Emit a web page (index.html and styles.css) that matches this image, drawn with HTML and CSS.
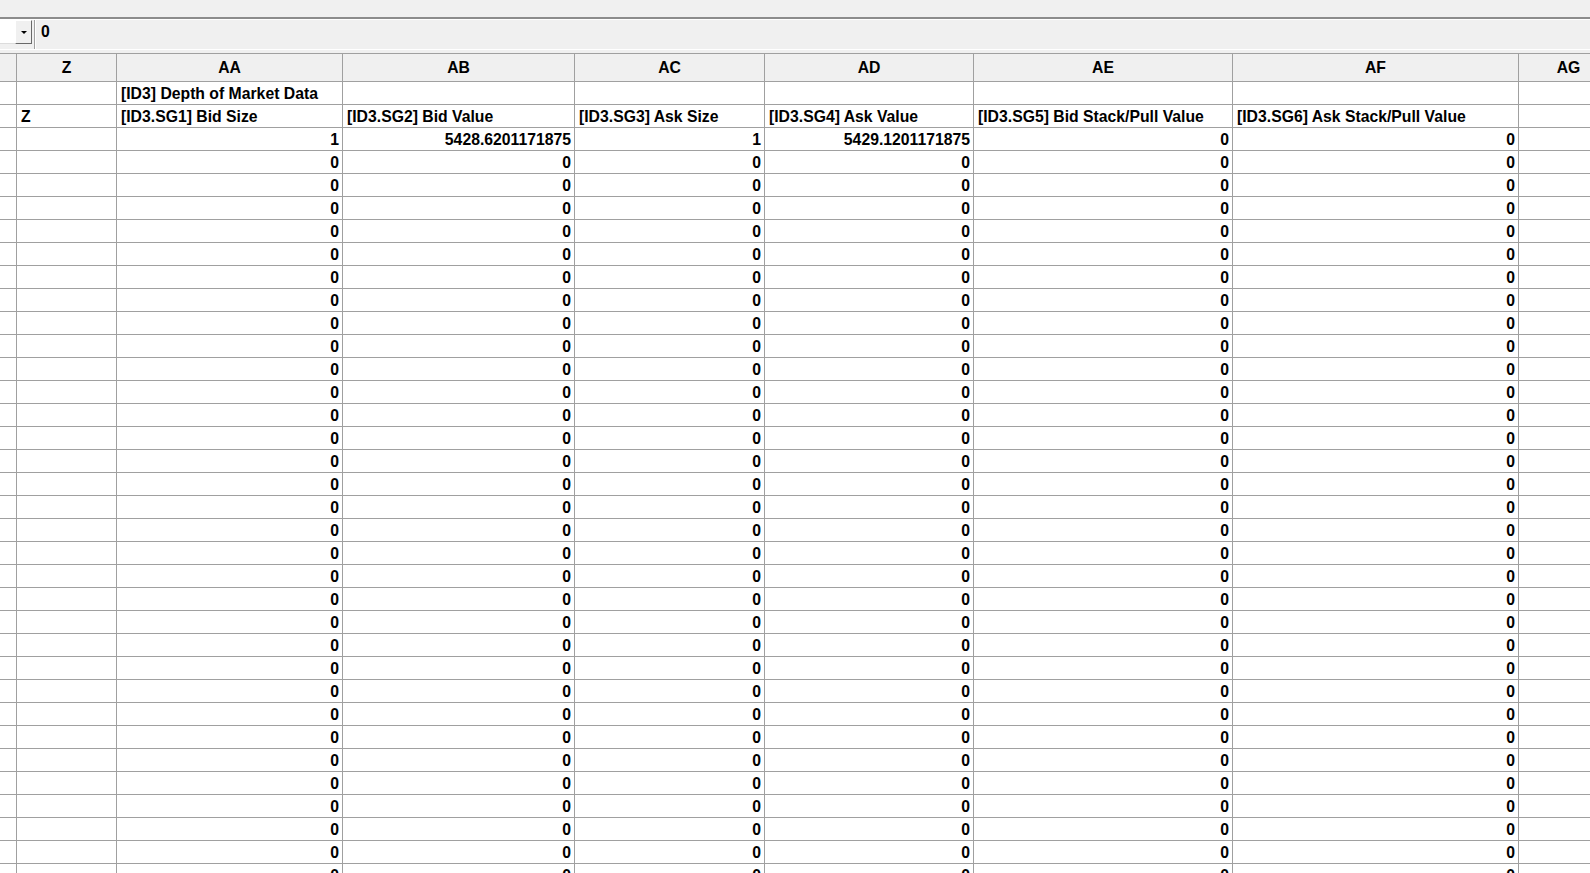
FILE: index.html
```html
<!DOCTYPE html>
<html>
<head>
<meta charset="utf-8">
<title>Sheet</title>
<link rel="stylesheet" href="styles.css">
</head>
<body>
<div class="app">
  <div class="titlebar"></div>
  <div class="formula">
    <div class="namebox">
      <div class="namefield"></div>
      <div class="namebtn"><span class="arrow"></span></div>
    </div>
    <div class="fsep"></div>
    <div class="ftext">0</div>
  </div>
  <div class="fgap"></div>
  <div class="sheet">
    <div class="row head">
      <div class="c rn"></div><div class="c">Z</div><div class="c">AA</div><div class="c">AB</div><div class="c">AC</div><div class="c">AD</div><div class="c">AE</div><div class="c">AF</div><div class="c">AG</div>
    </div>
    <div class="row">
      <div class="c rn"></div><div class="c"></div><div class="c l">[ID3] Depth of Market Data</div><div class="c"></div><div class="c"></div><div class="c"></div><div class="c"></div><div class="c"></div><div class="c"></div>
    </div>
    <div class="row">
      <div class="c rn"></div><div class="c l">Z</div><div class="c l">[ID3.SG1] Bid Size</div><div class="c l">[ID3.SG2] Bid Value</div><div class="c l">[ID3.SG3] Ask Size</div><div class="c l">[ID3.SG4] Ask Value</div><div class="c l">[ID3.SG5] Bid Stack/Pull Value</div><div class="c l">[ID3.SG6] Ask Stack/Pull Value</div><div class="c"></div>
    </div>
    <div class="row">
      <div class="c rn"></div><div class="c"></div><div class="c r">1</div><div class="c r">5428.6201171875</div><div class="c r">1</div><div class="c r">5429.1201171875</div><div class="c r">0</div><div class="c r">0</div><div class="c"></div>
    </div>
    <div class="row"><div class="c rn"></div><div class="c"></div><div class="c r">0</div><div class="c r">0</div><div class="c r">0</div><div class="c r">0</div><div class="c r">0</div><div class="c r">0</div><div class="c"></div></div>
    <div class="row"><div class="c rn"></div><div class="c"></div><div class="c r">0</div><div class="c r">0</div><div class="c r">0</div><div class="c r">0</div><div class="c r">0</div><div class="c r">0</div><div class="c"></div></div>
    <div class="row"><div class="c rn"></div><div class="c"></div><div class="c r">0</div><div class="c r">0</div><div class="c r">0</div><div class="c r">0</div><div class="c r">0</div><div class="c r">0</div><div class="c"></div></div>
    <div class="row"><div class="c rn"></div><div class="c"></div><div class="c r">0</div><div class="c r">0</div><div class="c r">0</div><div class="c r">0</div><div class="c r">0</div><div class="c r">0</div><div class="c"></div></div>
    <div class="row"><div class="c rn"></div><div class="c"></div><div class="c r">0</div><div class="c r">0</div><div class="c r">0</div><div class="c r">0</div><div class="c r">0</div><div class="c r">0</div><div class="c"></div></div>
    <div class="row"><div class="c rn"></div><div class="c"></div><div class="c r">0</div><div class="c r">0</div><div class="c r">0</div><div class="c r">0</div><div class="c r">0</div><div class="c r">0</div><div class="c"></div></div>
    <div class="row"><div class="c rn"></div><div class="c"></div><div class="c r">0</div><div class="c r">0</div><div class="c r">0</div><div class="c r">0</div><div class="c r">0</div><div class="c r">0</div><div class="c"></div></div>
    <div class="row"><div class="c rn"></div><div class="c"></div><div class="c r">0</div><div class="c r">0</div><div class="c r">0</div><div class="c r">0</div><div class="c r">0</div><div class="c r">0</div><div class="c"></div></div>
    <div class="row"><div class="c rn"></div><div class="c"></div><div class="c r">0</div><div class="c r">0</div><div class="c r">0</div><div class="c r">0</div><div class="c r">0</div><div class="c r">0</div><div class="c"></div></div>
    <div class="row"><div class="c rn"></div><div class="c"></div><div class="c r">0</div><div class="c r">0</div><div class="c r">0</div><div class="c r">0</div><div class="c r">0</div><div class="c r">0</div><div class="c"></div></div>
    <div class="row"><div class="c rn"></div><div class="c"></div><div class="c r">0</div><div class="c r">0</div><div class="c r">0</div><div class="c r">0</div><div class="c r">0</div><div class="c r">0</div><div class="c"></div></div>
    <div class="row"><div class="c rn"></div><div class="c"></div><div class="c r">0</div><div class="c r">0</div><div class="c r">0</div><div class="c r">0</div><div class="c r">0</div><div class="c r">0</div><div class="c"></div></div>
    <div class="row"><div class="c rn"></div><div class="c"></div><div class="c r">0</div><div class="c r">0</div><div class="c r">0</div><div class="c r">0</div><div class="c r">0</div><div class="c r">0</div><div class="c"></div></div>
    <div class="row"><div class="c rn"></div><div class="c"></div><div class="c r">0</div><div class="c r">0</div><div class="c r">0</div><div class="c r">0</div><div class="c r">0</div><div class="c r">0</div><div class="c"></div></div>
    <div class="row"><div class="c rn"></div><div class="c"></div><div class="c r">0</div><div class="c r">0</div><div class="c r">0</div><div class="c r">0</div><div class="c r">0</div><div class="c r">0</div><div class="c"></div></div>
    <div class="row"><div class="c rn"></div><div class="c"></div><div class="c r">0</div><div class="c r">0</div><div class="c r">0</div><div class="c r">0</div><div class="c r">0</div><div class="c r">0</div><div class="c"></div></div>
    <div class="row"><div class="c rn"></div><div class="c"></div><div class="c r">0</div><div class="c r">0</div><div class="c r">0</div><div class="c r">0</div><div class="c r">0</div><div class="c r">0</div><div class="c"></div></div>
    <div class="row"><div class="c rn"></div><div class="c"></div><div class="c r">0</div><div class="c r">0</div><div class="c r">0</div><div class="c r">0</div><div class="c r">0</div><div class="c r">0</div><div class="c"></div></div>
    <div class="row"><div class="c rn"></div><div class="c"></div><div class="c r">0</div><div class="c r">0</div><div class="c r">0</div><div class="c r">0</div><div class="c r">0</div><div class="c r">0</div><div class="c"></div></div>
    <div class="row"><div class="c rn"></div><div class="c"></div><div class="c r">0</div><div class="c r">0</div><div class="c r">0</div><div class="c r">0</div><div class="c r">0</div><div class="c r">0</div><div class="c"></div></div>
    <div class="row"><div class="c rn"></div><div class="c"></div><div class="c r">0</div><div class="c r">0</div><div class="c r">0</div><div class="c r">0</div><div class="c r">0</div><div class="c r">0</div><div class="c"></div></div>
    <div class="row"><div class="c rn"></div><div class="c"></div><div class="c r">0</div><div class="c r">0</div><div class="c r">0</div><div class="c r">0</div><div class="c r">0</div><div class="c r">0</div><div class="c"></div></div>
    <div class="row"><div class="c rn"></div><div class="c"></div><div class="c r">0</div><div class="c r">0</div><div class="c r">0</div><div class="c r">0</div><div class="c r">0</div><div class="c r">0</div><div class="c"></div></div>
    <div class="row"><div class="c rn"></div><div class="c"></div><div class="c r">0</div><div class="c r">0</div><div class="c r">0</div><div class="c r">0</div><div class="c r">0</div><div class="c r">0</div><div class="c"></div></div>
    <div class="row"><div class="c rn"></div><div class="c"></div><div class="c r">0</div><div class="c r">0</div><div class="c r">0</div><div class="c r">0</div><div class="c r">0</div><div class="c r">0</div><div class="c"></div></div>
    <div class="row"><div class="c rn"></div><div class="c"></div><div class="c r">0</div><div class="c r">0</div><div class="c r">0</div><div class="c r">0</div><div class="c r">0</div><div class="c r">0</div><div class="c"></div></div>
    <div class="row"><div class="c rn"></div><div class="c"></div><div class="c r">0</div><div class="c r">0</div><div class="c r">0</div><div class="c r">0</div><div class="c r">0</div><div class="c r">0</div><div class="c"></div></div>
    <div class="row"><div class="c rn"></div><div class="c"></div><div class="c r">0</div><div class="c r">0</div><div class="c r">0</div><div class="c r">0</div><div class="c r">0</div><div class="c r">0</div><div class="c"></div></div>
    <div class="row"><div class="c rn"></div><div class="c"></div><div class="c r">0</div><div class="c r">0</div><div class="c r">0</div><div class="c r">0</div><div class="c r">0</div><div class="c r">0</div><div class="c"></div></div>
    <div class="row"><div class="c rn"></div><div class="c"></div><div class="c r">0</div><div class="c r">0</div><div class="c r">0</div><div class="c r">0</div><div class="c r">0</div><div class="c r">0</div><div class="c"></div></div>
    <div class="row"><div class="c rn"></div><div class="c"></div><div class="c r">0</div><div class="c r">0</div><div class="c r">0</div><div class="c r">0</div><div class="c r">0</div><div class="c r">0</div><div class="c"></div></div>
    <div class="row"><div class="c rn"></div><div class="c"></div><div class="c r">0</div><div class="c r">0</div><div class="c r">0</div><div class="c r">0</div><div class="c r">0</div><div class="c r">0</div><div class="c"></div></div>
    <div class="row"><div class="c rn"></div><div class="c"></div><div class="c r">0</div><div class="c r">0</div><div class="c r">0</div><div class="c r">0</div><div class="c r">0</div><div class="c r">0</div><div class="c"></div></div>
  </div>
</div>
</body>
</html>
```

FILE: styles.css
```css
html, body {
  margin: 0;
  padding: 0;
  background: #f0f0f0;
  overflow: hidden;
}

.app {
  width: 1590px;
  height: 873px;
  overflow: hidden;
  font-family: "Liberation Sans", Arial, sans-serif;
  font-weight: bold;
  font-size: 15.75px;
  color: #000;
}

.titlebar {
  height: 17px;
  background: #f0f0f0;
  border-bottom: 2px solid #8c8c8c;
  box-shadow: 0 1px 0 #ffffff;
}

.formula {
  margin-top: 1px;
  height: 29px;
  display: flex;
  align-items: flex-start;
  background: #f0f0f0;
}

.namebox {
  display: flex;
  width: 32px;
  height: 24px;
}

.namefield {
  width: 15px;
  height: 24px;
  background: #ffffff;
  box-sizing: border-box;
  border-bottom: 1px solid #dcdcdc;
}

.namebtn {
  width: 17px;
  height: 24px;
  box-sizing: border-box;
  background: #f0f0f0;
  border-top: 1px solid #ffffff;
  border-left: 1px solid #ffffff;
  border-right: 1px solid #696969;
  border-bottom: 1px solid #696969;
  display: flex;
  align-items: center;
  justify-content: center;
}

.arrow {
  width: 0;
  height: 0;
  border-left: 3px solid transparent;
  border-right: 3px solid transparent;
  border-top: 3px solid #000;
  margin-top: 1px;
}

.fsep {
  width: 1px;
  height: 29px;
  margin-left: 2px;
  background: #a0a0a0;
  box-shadow: 1px 0 0 #ffffff;
}

.ftext {
  padding-left: 6px;
  line-height: 22px;
  margin-top: 1px;
}

.fgap {
  height: 3px;
  border-top: 1px solid #ffffff;
  background: #f0f0f0;
}

.sheet {
  background: #ffffff;
  border-top: 1px solid #a0a0a0;
}

.row {
  display: grid;
  grid-template-columns: 17px 100px 226px 232px 190px 209px 259px 286px 100px;
  grid-template-rows: 23px;
  height: 23px;
  background: #ffffff;
}

.row.head {
  grid-template-rows: 28px;
  height: 28px;
  background: #f0f0f0;
}

.c {
  box-sizing: border-box;
  height: 23px;
  padding-top: 2px;
  border-right: 1px solid #a0a0a0;
  border-bottom: 1px solid #a0a0a0;
  line-height: 20px;
  white-space: nowrap;
  overflow: hidden;
  text-align: center;
}

.head .c {
  height: 28px;
  padding-top: 0;
  line-height: 27px;
}

.c.l {
  text-align: left;
  padding-left: 4px;
}

.c.r {
  text-align: right;
  padding-right: 3px;
}
```
